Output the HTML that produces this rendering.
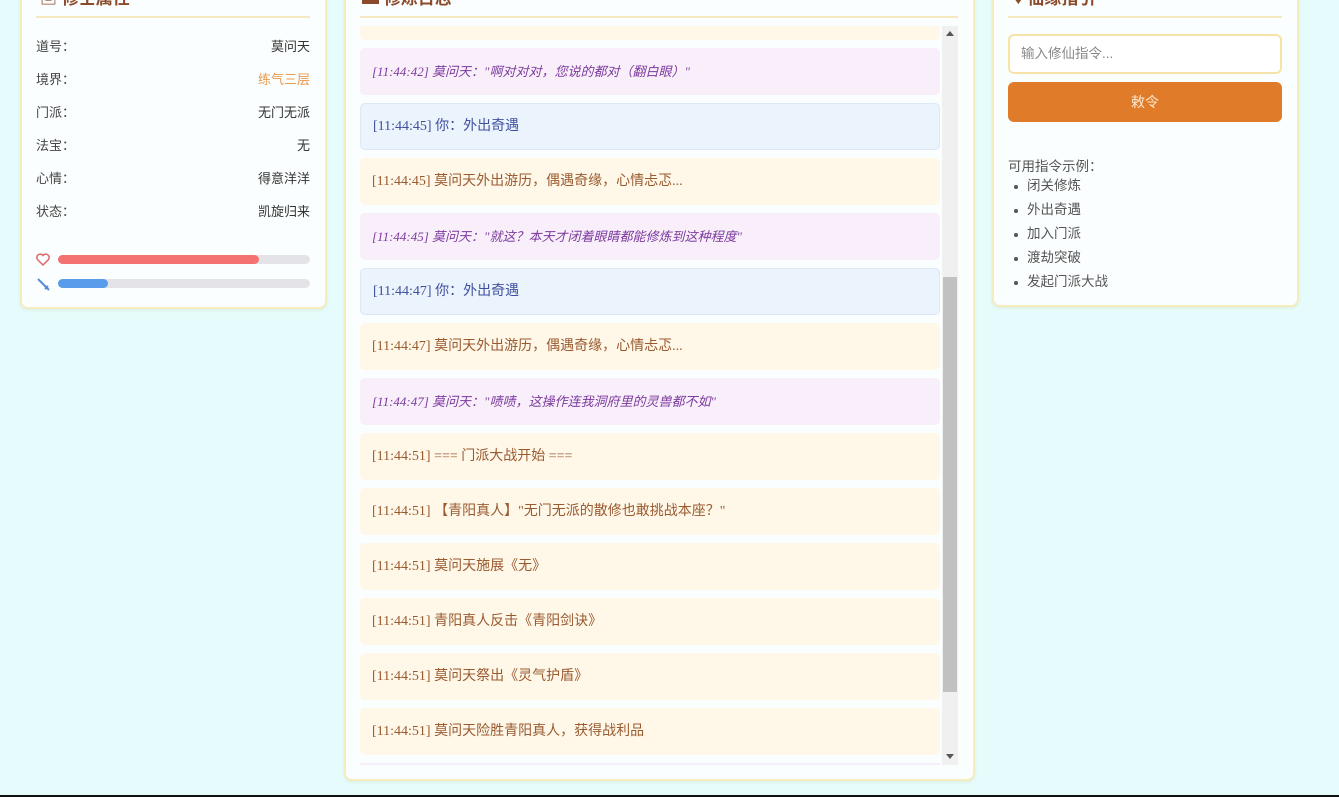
<!DOCTYPE html>
<html><head><meta charset="utf-8"><style>
*{box-sizing:border-box;margin:0;padding:0}
body{width:1339px;height:797px;overflow:hidden;background:#e6fcfc;position:relative;font-family:"Liberation Serif","Noto Sans CJK SC",serif;}
.panel{position:absolute;background:#fbfefe;border:2px solid #f5ecc0;border-radius:8px;box-shadow:0 1px 3px rgba(200,190,120,.25)}
.hline{position:absolute;height:2px;background:#f6e9c2}
.title{position:absolute;top:-16px;font-size:17px;font-weight:bold;color:#8b4a2a;font-family:"Liberation Sans","Noto Sans CJK SC",sans-serif}
.row{position:absolute;left:36px;width:274px;font-size:13px;color:#444;font-family:"Liberation Sans","Noto Sans CJK SC",sans-serif}
.row span{float:right;color:#333}
.bar{position:absolute;left:58px;width:252px;height:9px;border-radius:5px;background:#e4e4e8}
.bar i{display:block;height:9px;border-radius:5px}
.e{position:absolute;left:360px;width:580px;height:47px;border-radius:5px;padding-left:12px;line-height:47px;font-size:14px;white-space:nowrap}
.y{background:#fff8e8;color:#9a5a30}
.p{background:#f8effa;color:#7c3a9e;font-style:italic;font-size:13px}
.b{background:#ebf3fc;color:#4050a0;border:1px solid #dbe8f6;line-height:45px}
ul{position:absolute;left:1012px;top:174px;list-style:none;font-size:13.5px;color:#555;font-family:"Liberation Sans","Noto Sans CJK SC",sans-serif}
ul li{height:24px;line-height:24px;padding-left:15px;position:relative}
ul li:before{content:"";position:absolute;left:2px;top:11px;width:4px;height:4px;border-radius:2px;background:#555}
</style></head><body>
<div class="panel" style="left:20px;top:-30px;width:307px;height:339px"></div>
<div class="title" style="left:40px">▣ 修士属性</div>
<div class="hline" style="left:36px;top:16px;width:274px"></div>
<div class="row" style="top:36px">道号：<span>莫问天</span></div>
<div class="row" style="top:69px">境界：<span style="color:#e89a50">练气三层</span></div>
<div class="row" style="top:102px">门派：<span>无门无派</span></div>
<div class="row" style="top:135px">法宝：<span>无</span></div>
<div class="row" style="top:168px">心情：<span>得意洋洋</span></div>
<div class="row" style="top:201px">状态：<span>凯旋归来</span></div>
<svg style="position:absolute;left:36px;top:253px" width="14" height="13" viewBox="0 0 14 13"><path d="M7 12 L1.5 6.5 A3 3 0 0 1 7 2.5 A3 3 0 0 1 12.5 6.5 Z" fill="none" stroke="#e06868" stroke-width="1.5"/></svg>
<div class="bar" style="top:255px"><i style="width:201px;background:#f57272"></i></div>
<svg style="position:absolute;left:36px;top:277px" width="14" height="14" viewBox="0 0 14 14"><path d="M2 2 L10 10 M9 12 L12 9 M11 11 L13 13" stroke="#5a8ad8" stroke-width="2"/></svg>
<div class="bar" style="top:279px"><i style="width:50px;background:#5a9cec"></i></div>

<div class="panel" style="left:344px;top:-30px;width:631px;height:811px"></div>
<div class="title" style="left:362px">▬ 修炼日志</div>
<div class="hline" style="left:360px;top:16px;width:598px"></div>
<div class="e p" style="top:48px">[11:44:42] 莫问天："啊对对对，您说的都对（翻白眼）"</div>
<div class="e b" style="top:103px">[11:44:45] 你：外出奇遇</div>
<div class="e y" style="top:158px">[11:44:45] 莫问天外出游历，偶遇奇缘，心情忐忑...</div>
<div class="e p" style="top:213px">[11:44:45] 莫问天："就这？本天才闭着眼睛都能修炼到这种程度"</div>
<div class="e b" style="top:268px">[11:44:47] 你：外出奇遇</div>
<div class="e y" style="top:323px">[11:44:47] 莫问天外出游历，偶遇奇缘，心情忐忑...</div>
<div class="e p" style="top:378px">[11:44:47] 莫问天："啧啧，这操作连我洞府里的灵兽都不如"</div>
<div class="e y" style="top:433px">[11:44:51] === 门派大战开始 ===</div>
<div class="e y" style="top:488px">[11:44:51] 【青阳真人】"无门无派的散修也敢挑战本座？"</div>
<div class="e y" style="top:543px">[11:44:51] 莫问天施展《无》</div>
<div class="e y" style="top:598px">[11:44:51] 青阳真人反击《青阳剑诀》</div>
<div class="e y" style="top:653px">[11:44:51] 莫问天祭出《灵气护盾》</div>
<div class="e y" style="top:708px">[11:44:51] 莫问天险胜青阳真人，获得战利品</div>
<div style="position:absolute;left:360px;top:763px;width:580px;height:2px;background:#f6eefa"></div>
<div style="position:absolute;left:360px;top:26px;width:580px;height:14px;background:#fff8e8;border-radius:0 0 5px 5px"></div>
<div style="position:absolute;left:942px;top:26px;width:16px;height:739px;background:#f0f0f0"></div>
<div style="position:absolute;left:943px;top:277px;width:14px;height:415px;background:#c1c1c1"></div>
<div style="position:absolute;left:946px;top:31px;width:0;height:0;border:4px solid transparent;border-bottom:5px solid #555;border-top:0"></div>
<div style="position:absolute;left:946px;top:754px;width:0;height:0;border:4px solid transparent;border-top:5px solid #555;border-bottom:0"></div>

<div class="panel" style="left:992px;top:-30px;width:307px;height:337px"></div>
<div class="title" style="left:1014px">♦ 仙缘指引</div>
<div class="hline" style="left:1008px;top:16px;width:274px"></div>
<div style="position:absolute;left:1008px;top:34px;width:274px;height:40px;border:2px solid #f6e3a8;border-radius:6px;background:#fff;font-size:13.5px;color:#888;line-height:36px;padding-left:11px;font-family:'Liberation Sans','Noto Sans CJK SC',sans-serif">输入修仙指令...</div>
<div style="position:absolute;left:1008px;top:82px;width:274px;height:40px;border-radius:6px;background:#e07b2a;color:#fde8d0;text-align:center;line-height:40px;font-size:14px;font-family:'Liberation Sans','Noto Sans CJK SC',sans-serif">敕令</div>
<div style="position:absolute;left:1008px;top:155px;font-size:13.5px;color:#555;font-family:'Liberation Sans','Noto Sans CJK SC',sans-serif">可用指令示例：</div>
<ul><li>闭关修炼</li><li>外出奇遇</li><li>加入门派</li><li>渡劫突破</li><li>发起门派大战</li></ul>
<div style="position:absolute;left:0;top:795px;width:1339px;height:2px;background:#111"></div>
</body></html>
